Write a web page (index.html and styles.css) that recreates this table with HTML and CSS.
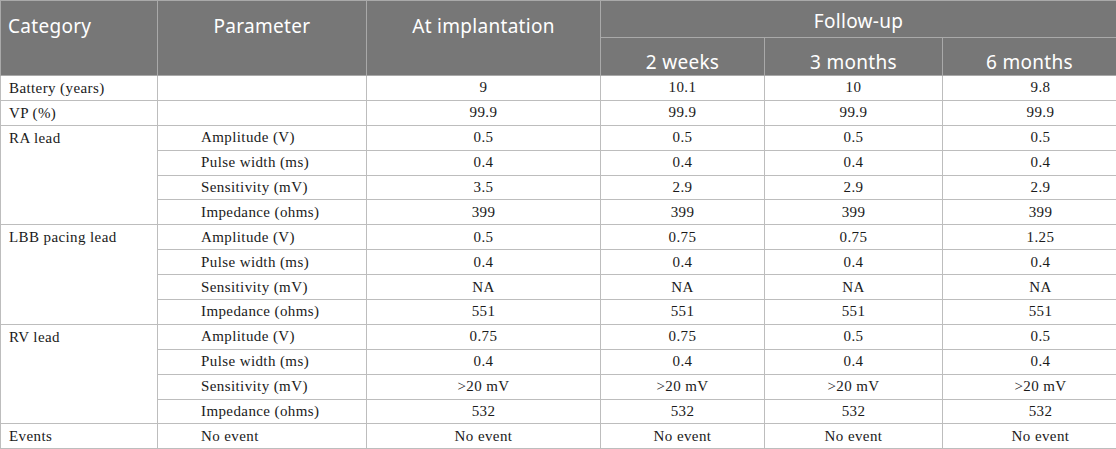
FILE: index.html
```html
<!DOCTYPE html>
<html>
<head>
<meta charset="utf-8">
<link rel="stylesheet" href="styles.css">
</head>
<body>
<table class="data">
  <colgroup>
    <col class="c1"><col class="c2"><col class="c3"><col class="c4"><col class="c5"><col class="c6">
  </colgroup>
  <thead>
    <tr class="h1">
      <th rowspan="2" class="hcat">Category</th>
      <th rowspan="2" class="htop">Parameter</th>
      <th rowspan="2" class="htop">At implantation</th>
      <th colspan="3" class="hfollow">Follow-up</th>
    </tr>
    <tr class="h2">
      <th class="hsub">2 weeks</th>
      <th class="hsub">3 months</th>
      <th class="hsub">6 months</th>
    </tr>
  </thead>
  <tbody>
    <tr><td class="cat">Battery (years)</td><td class="par"></td><td>9</td><td>10.1</td><td>10</td><td class="last">9.8</td></tr>
    <tr><td class="cat">VP (%)</td><td class="par"></td><td>99.9</td><td>99.9</td><td>99.9</td><td class="last">99.9</td></tr>
    <tr><td class="cat" rowspan="4">RA lead</td><td class="par">Amplitude (V)</td><td>0.5</td><td>0.5</td><td>0.5</td><td class="last">0.5</td></tr>
    <tr><td class="par">Pulse width (ms)</td><td>0.4</td><td>0.4</td><td>0.4</td><td class="last">0.4</td></tr>
    <tr><td class="par">Sensitivity (mV)</td><td>3.5</td><td>2.9</td><td>2.9</td><td class="last">2.9</td></tr>
    <tr><td class="par">Impedance (ohms)</td><td>399</td><td>399</td><td>399</td><td class="last">399</td></tr>
    <tr><td class="cat" rowspan="4">LBB pacing lead</td><td class="par">Amplitude (V)</td><td>0.5</td><td>0.75</td><td>0.75</td><td class="last">1.25</td></tr>
    <tr><td class="par">Pulse width (ms)</td><td>0.4</td><td>0.4</td><td>0.4</td><td class="last">0.4</td></tr>
    <tr><td class="par">Sensitivity (mV)</td><td>NA</td><td>NA</td><td>NA</td><td class="last">NA</td></tr>
    <tr><td class="par">Impedance (ohms)</td><td>551</td><td>551</td><td>551</td><td class="last">551</td></tr>
    <tr><td class="cat" rowspan="4">RV lead</td><td class="par">Amplitude (V)</td><td>0.75</td><td>0.75</td><td>0.5</td><td class="last">0.5</td></tr>
    <tr><td class="par">Pulse width (ms)</td><td>0.4</td><td>0.4</td><td>0.4</td><td class="last">0.4</td></tr>
    <tr><td class="par">Sensitivity (mV)</td><td>&gt;20 mV</td><td>&gt;20 mV</td><td>&gt;20 mV</td><td class="last">&gt;20 mV</td></tr>
    <tr><td class="par">Impedance (ohms)</td><td>532</td><td>532</td><td>532</td><td class="last">532</td></tr>
    <tr><td class="cat">Events</td><td class="par">No event</td><td>No event</td><td>No event</td><td>No event</td><td class="last">No event</td></tr>
  </tbody>
</table>
</body>
</html>
```
FILE: styles.css
```css
html, body {
  margin: 0;
  padding: 0;
  background: #ffffff;
}

.data {
  border-collapse: collapse;
  table-layout: fixed;
  width: 1116px;
  font-family: "Liberation Serif", "Times New Roman", serif;
  font-size: 15px;
  letter-spacing: 0.4px;
  color: #1a1a1a;
}

.c1 { width: 157px; }
.c2 { width: 209px; }
.c3 { width: 234px; }
.c4 { width: 164px; }
.c5 { width: 178px; }
.c6 { width: 174px; }

.data th {
  background: #777777;
  color: #ffffff;
  font-family: "Noto Sans", "Open Sans", sans-serif;
  font-weight: normal;
  font-size: 19px;
  letter-spacing: 0.3px;
  line-height: 24px;
  border: 1px solid #a9a9a9;
  padding: 0;
}

.h1 { height: 37px; }
.h2 { height: 38px; }

.hcat {
  text-align: left;
  vertical-align: top;
  padding: 13px 0 0 7px !important;
}

.htop {
  text-align: center;
  vertical-align: top;
  padding-top: 13px !important;
}

.hfollow {
  text-align: center;
  vertical-align: bottom;
  padding-bottom: 4px !important;
}

.hsub {
  text-align: center;
  vertical-align: bottom;
  padding-bottom: 1px !important;
}

.data tbody tr {
  height: 24.9px;
}

.data td {
  border: 1px solid #bdbdbd;
  padding: 0;
  text-align: center;
  vertical-align: middle;
  line-height: 17px;
}

.data td.cat {
  text-align: left;
  vertical-align: top;
  padding: 4px 0 0 8px;
}

.data td.par {
  text-align: left;
  padding-left: 43px;
}

.data td.last {
  padding-left: 22px;
}
```
